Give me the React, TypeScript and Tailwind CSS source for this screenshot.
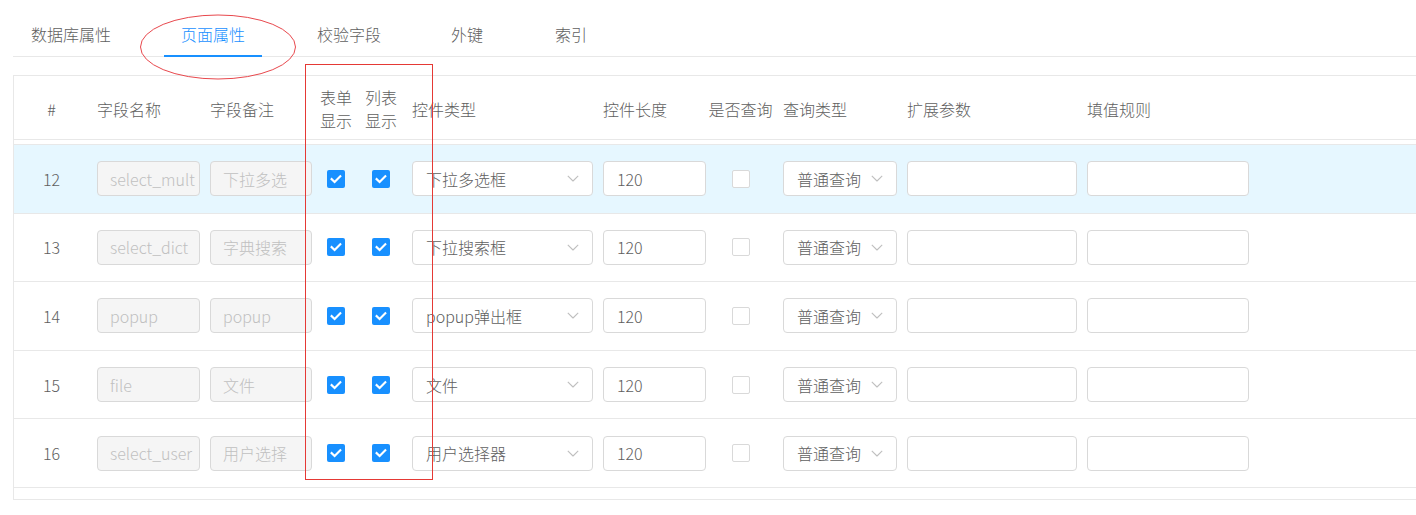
import React from "react"

type Row = {
    no: number
    name: string
    remark: string
    ctrl: string
}

const rows: Row[] = [
    { no: 12, name: "select_mult", remark: "下拉多选", ctrl: "下拉多选框" },
    { no: 13, name: "select_dict", remark: "字典搜索", ctrl: "下拉搜索框" },
    { no: 14, name: "popup", remark: "popup", ctrl: "popup弹出框" },
    { no: 15, name: "file", remark: "文件", ctrl: "文件" },
    { no: 16, name: "select_user", remark: "用户选择", ctrl: "用户选择器" },
]

// left margin of each tab, tuned to the screenshot
const tabs = [
    { label: "数据库属性", ml: "ml-0" },
    { label: "页面属性", ml: "ml-[36px]" },
    { label: "校验字段", ml: "ml-[38px]" },
    { label: "外键", ml: "ml-[36px]" },
    { label: "索引", ml: "ml-[38px]" },
]

function Chevron() {
    return (
        <svg width="12" height="7" viewBox="0 0 12 7" fill="none" className="shrink-0">
            <path d="M0.8 0.8 L6 6 L11.2 0.8" stroke="#bfbfbf" strokeWidth="1.1" strokeLinejoin="round" />
        </svg>
    )
}

function Checkbox({ checked }: { checked: boolean }) {
    if (!checked) {
        return <div className="h-[18px] w-[18px] rounded-[2px] border border-[#d9d9d9] bg-white" />
    }
    return (
        <div className="flex h-[18px] w-[18px] items-center justify-center rounded-[2px] bg-[#1890ff]">
            <svg width="18" height="18" viewBox="0 0 18 18" fill="none">
                <path d="M4.6 9.1 L7.6 12 L13.3 6.2" stroke="#fff" strokeWidth="2.1" strokeLinecap="square" />
            </svg>
        </div>
    )
}

function DisabledInput({ value, width }: { value: string; width: string }) {
    return (
        <div className={`${width} flex h-[35px] items-center overflow-hidden whitespace-nowrap rounded-[4px] border border-[#d9d9d9] bg-[#f5f5f5] pl-[12px] text-[#c0c0c0]`}>
            {value}
        </div>
    )
}

function TextInput({ value, width }: { value?: string; width: string }) {
    return (
        <div className={`${width} flex h-[35px] items-center overflow-hidden whitespace-nowrap rounded-[4px] border border-[#d9d9d9] bg-white pl-[13px] text-[#606060]`}>
            {value}
        </div>
    )
}

function Select({ value, width }: { value: string; width: string }) {
    return (
        <div className={`${width} flex h-[35px] items-center justify-between rounded-[4px] border border-[#d9d9d9] bg-white pl-[13px] pr-[13px] text-[#606060]`}>
            <span className="whitespace-nowrap">{value}</span>
            <Chevron />
        </div>
    )
}

export default function App() {
    return (
        <div
            className="relative h-[515px] w-[1416px] overflow-hidden bg-white text-[16px] font-light leading-[22px] text-[#606060]"
            style={{ fontFamily: '"Noto Sans CJK SC", "Noto Sans", sans-serif' }}
        >
            {/* Tabs */}
            <div className="ml-[13px] flex border-b border-[#e8e8e8] pl-[1px]">
                {tabs.map((t, i) => (
                    <div
                        key={t.label}
                        className={`${t.ml} -mb-px border-b-2 px-[17px] pb-[10px] pt-[23px] whitespace-nowrap ${
                            i === 1 ? "border-[#1890ff] text-[#1890ff]" : "border-transparent text-[#606060]"
                        }`}
                    >
                        {t.label}
                    </div>
                ))}
            </div>

            {/* Table */}
            <div className="ml-[13px] mt-[18px] w-[1420px] border-b border-l border-t border-[#e8e8e8]">
                <div className="flex h-[64px] items-center border-b border-[#e8e8e8] pt-[3px]">
                    <div className="w-[75px] text-center">#</div>
                    <div className="w-[113px] pl-[8px]">字段名称</div>
                    <div className="w-[112px] pl-[8px]">字段备注</div>
                    <div className="flex w-[44px] flex-col items-center leading-[22.7px]">
                        <span>表单</span>
                        <span>显示</span>
                    </div>
                    <div className="flex w-[46px] flex-col items-center leading-[22.7px]">
                        <span>列表</span>
                        <span>显示</span>
                    </div>
                    <div className="w-[191px] pl-[8px]">控件类型</div>
                    <div className="w-[111px] pl-[8px] whitespace-nowrap">控件长度</div>
                    <div className="flex w-[69px] justify-center whitespace-nowrap">是否查询</div>
                    <div className="w-[124px] pl-[8px]">查询类型</div>
                    <div className="w-[180px] pl-[8px]">扩展参数</div>
                    <div className="w-[180px] pl-[8px]">填值规则</div>
                </div>
                <div className="h-[4px]" />
                <div className="border-t border-[#e8e8e8]">
                    {rows.map((r, i) => (
                        <div
                            key={r.no}
                            className={`flex h-[68.6px] items-center border-b border-[#e8e8e8] ${i === 0 ? "bg-[#e6f7ff]" : "bg-white"}`}
                        >
                            <div className="w-[75px] text-center">{r.no}</div>
                            <div className="w-[113px] pl-[8px]">
                                <DisabledInput value={r.name} width="w-[103px]" />
                            </div>
                            <div className="w-[112px] pl-[8px]">
                                <DisabledInput value={r.remark} width="w-[102px]" />
                            </div>
                            <div className="flex w-[44px] justify-center">
                                <Checkbox checked />
                            </div>
                            <div className="flex w-[46px] justify-center">
                                <Checkbox checked />
                            </div>
                            <div className="w-[191px] pl-[8px]">
                                <Select value={r.ctrl} width="w-[181px]" />
                            </div>
                            <div className="w-[111px] pl-[8px]">
                                <TextInput value="120" width="w-[103px]" />
                            </div>
                            <div className="flex w-[69px] justify-center">
                                <Checkbox checked={false} />
                            </div>
                            <div className="w-[124px] pl-[8px]">
                                <Select value="普通查询" width="w-[114px]" />
                            </div>
                            <div className="w-[180px] pl-[8px]">
                                <TextInput width="w-[170px]" />
                            </div>
                            <div className="w-[180px] pl-[8px]">
                                <TextInput width="w-[162px]" />
                            </div>
                        </div>
                    ))}
                </div>
                <div className="h-[11px]" />
            </div>

            {/* Annotation marks */}
            <svg className="pointer-events-none absolute left-[139px] top-[14px]" width="158" height="66" viewBox="0 0 158 66" fill="none">
                <ellipse cx="79" cy="33" rx="77.5" ry="32" stroke="#e8484d" strokeWidth="1" />
            </svg>
            <div className="pointer-events-none absolute left-[305px] top-[64px] h-[416px] w-[128px] border border-[#e53935]" />
        </div>
    )
}
